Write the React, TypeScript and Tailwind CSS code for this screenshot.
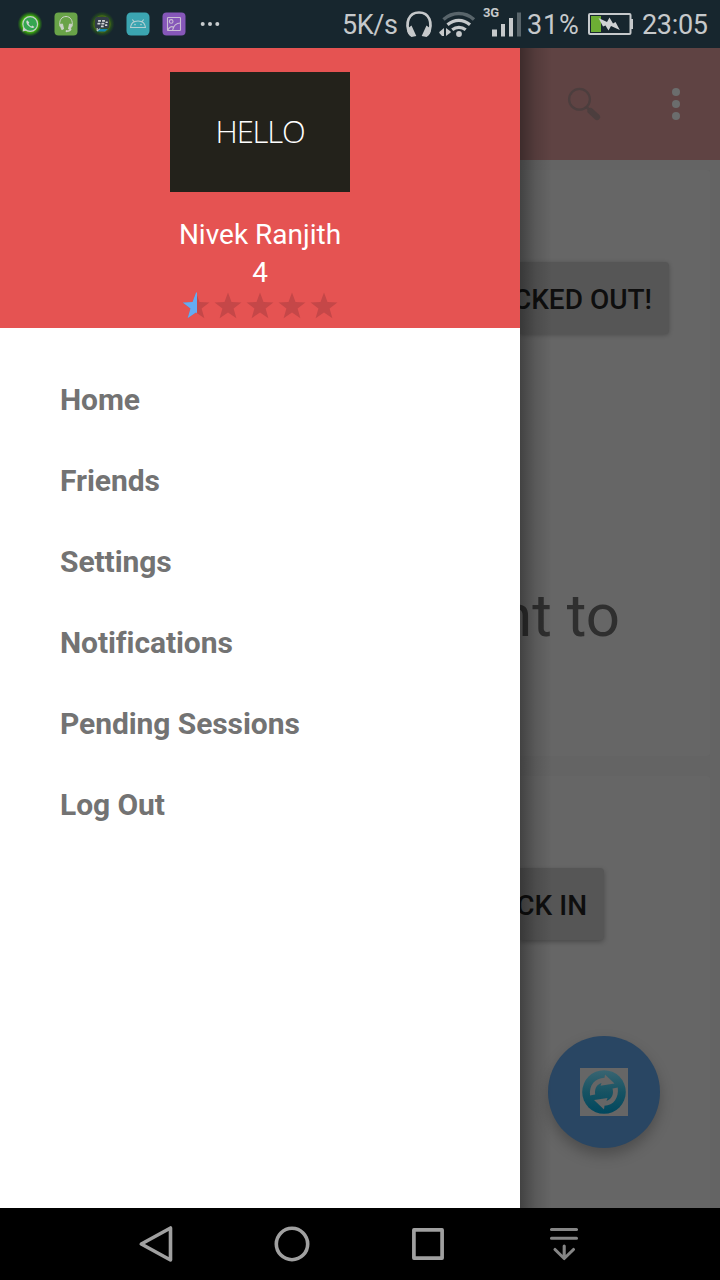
import React from "react";

const menuItems = ["Home", "Friends", "Settings", "Notifications", "Pending Sessions", "Log Out"];

const STAR = "M16 2.6 L19.5 12 L29.4 12.4 L21.6 18.4 L24.4 28.2 L16 22.5 L7.6 28.2 L10.4 18.4 L2.6 12.4 L12.5 12 Z";

function Star({ half }: { half?: boolean }) {
  return (
    <svg width="32" height="32" viewBox="0 0 32 32">
      <path d={STAR} fill="#c54748" />
      {half && <path d="M17 2.6 L16 2.6 L12.5 12 L2.6 12.4 L10.4 18.4 L7.6 28.2 L16 22.5 L17 23.2 Z" fill="#64acf2" />}
    </svg>
  );
}

function NotificationIcons() {
  return (
    <div className="flex items-center gap-3">
      <svg width="24" height="24" viewBox="0 0 24 24" fill="none" className="overflow-visible">
        <defs>
          <radialGradient id="glowA">
            <stop offset="0.66" stopColor="#3fb40c" />
            <stop offset="1" stopColor="#2c8a12" stopOpacity="0" />
          </radialGradient>
        </defs>
        <circle cx="12" cy="12" r="12.5" fill="url(#glowA)" />
        <circle cx="12.2" cy="12" r="7.4" fill="#35a650" stroke="#c8cfc8" strokeWidth="1.2" />
        <path d="M5.2 15.5 4.6 19.4 9 18.4" fill="#c8cfc8" />
        <path d="M9.2 8.2c-1.6 1.2-.8 3.6 1.5 5.8 2.4 2.2 4.7 2.6 5.7.9l-2.1-1.4-1 .9c-1.4-.7-2.2-1.5-2.8-2.7l.8-1.1z" fill="#d0d5d0" />
      </svg>
      <svg width="24" height="24" viewBox="0 0 24 24" fill="none">
        <rect x=".5" y=".5" width="23" height="23" rx="4" fill="#69a348" />
        <path d="M6 14.5C4.7 8.5 7.6 4.5 12 4.5s7.3 4 6 10" stroke="#ccd2c8" strokeWidth="1" />
        <path d="M6 12.5 8.5 12l1 5-1.8.5zM18 12.5l-2.5-.5-1 5 1.8.5z" fill="#ccd2c8" stroke="#ccd2c8" />
        <path d="M17 17c-.6 1.5-1.8 2.2-3.8 2.2" stroke="#ccd2c8" strokeWidth="1.3" />
        <circle cx="12.7" cy="19.2" r="1.1" fill="#ccd2c8" />
      </svg>
      <svg width="24" height="24" viewBox="0 0 24 24" fill="none" className="overflow-visible">
        <defs>
          <radialGradient id="glowB">
            <stop offset="0.65" stopColor="#2d5c18" />
            <stop offset="1" stopColor="#25511b" stopOpacity="0" />
          </radialGradient>
        </defs>
        <circle cx="12" cy="12" r="12.5" fill="url(#glowB)" />
        <circle cx="12" cy="12" r="8.2" stroke="#4b641b" />
        <path d="M7 5h9.500q2.500 0 2.500 2.500V14q0 2.500-2.500 2.500H10L7 19v-2.500q-2 0-2-2.500V7.500Q5 5 7 5Z" fill="#333c48" />
        <path d="M9 17h9l-3 2.500H7z" fill="#1387b0" />
        <path d="M7.200 16v3l3-2.500" stroke="#d6d9dc" strokeWidth="1" />
        <g fill="#d1d4d6">
          <rect x="8" y="8" width="3" height="1.700" rx=".5" />
          <rect x="12" y="8" width="3" height="1.700" rx=".5" />
          <rect x="7.400" y="10.800" width="3" height="1.700" rx=".5" />
          <rect x="11.400" y="10.800" width="3" height="1.700" rx=".5" />
          <rect x="15.500" y="9.500" width="2.300" height="1.600" rx=".5" />
          <rect x="10.900" y="13.600" width="2.800" height="1.600" rx=".5" />
          <rect x="15" y="12.300" width="2.300" height="1.600" rx=".5" />
        </g>
      </svg>
      <svg width="24" height="24" viewBox="0 0 24 24" fill="none">
        <rect x=".5" y=".5" width="23" height="23" rx="4.5" fill="#3ba5b1" />
        <path d="M4.500 15.500h15c-.4-4.600-3.400-6.500-7.500-6.500s-7.100 1.900-7.500 6.500ZM6.300 7.500l2 2.300M17.700 7.500l-2 2.300" stroke="#b4cfd2" strokeWidth="1.100" strokeLinejoin="round" />
        <circle cx="9" cy="12.600" r=".8" fill="#b4cfd2" />
        <circle cx="15" cy="12.600" r=".8" fill="#b4cfd2" />
      </svg>
      <svg width="24" height="24" viewBox="0 0 24 24" fill="none" stroke="#c9bdd3" strokeWidth="1.100">
        <rect x=".5" y=".5" width="23" height="23" rx="4" fill="#8657b9" stroke="none" />
        <rect x="5.500" y="5.500" width="13" height="13" rx=".7" />
        <circle cx="9.200" cy="9.400" r="1.800" />
        <path d="M5.500 18.500c2-3.600 4-4.600 6-3.300M10.500 18.500c1-5 4-7.500 8-7.500" />
      </svg>
      <svg width="24" height="24" viewBox="0 0 24 24" fill="#c9cdcf">
        <circle cx="4.700" cy="12" r="2" />
        <circle cx="12" cy="12" r="2" />
        <circle cx="19.300" cy="12" r="2" />
      </svg>
    </div>
  );
}

function StatusBar() {
  return (
    <header className="flex h-12 w-full shrink-0 items-center bg-[#17262e] pl-[18px] text-[27px] leading-12 text-[#c6c9cb]">
      <NotificationIcons />
      <span className="ml-[120px] w-[56px] pt-[2px] tracking-[-0.4px] whitespace-nowrap">5K/s</span>
      <svg width="30" height="48" viewBox="404 0 30 48" fill="none" className="ml-[6px]">
        <path d="M409.500 33C405 23 408.500 12.500 419 12.500s14 10.500 9.500 20.500" stroke="#c6c9cb" strokeWidth="2.700" />
        <path d="M411.500 25.500 416.300 36l-4.800 1c-3-1.500-4.500-4.500-4.500-8ZM426.500 25.500 421.700 36l4.800 1c3-1.500 4.500-4.500 4.500-8Z" fill="#c6c9cb" />
      </svg>
      <svg width="44" height="48" viewBox="437 0 44 48" fill="none" className="ml-[3px]">
        <path d="M443.500 19.500c9-8 21.500-8 30.500 0" stroke="#59656b" strokeWidth="3.500" />
        <path d="M447.500 24.800c7-6 15.500-6 22.500 0M452.200 29.800c4-3.200 9.500-3.200 13.500 0" stroke="#c6c9cb" strokeWidth="3.200" />
        <circle cx="459" cy="34" r="2.900" fill="#c6c9cb" />
        <path d="M444 28v8h-2l-2.700-3v-1zM446 28v8l4.700-3.500v-1z" fill="#c6c9cb" />
      </svg>
      <div className="ml-0.5 flex h-12 w-[41px] items-start">
        <span className="w-5 pt-[5px] text-[13px] leading-4 font-bold tracking-[-0.2px]">3G</span>
        <svg width="34" height="48" viewBox="487 0 34 48" className="-ml-[16px] shrink-0">
          <rect x="492" y="29.500" width="5" height="7" fill="#c6c9cb" />
          <rect x="501" y="24" width="4" height="12.500" fill="#c6c9cb" />
          <rect x="509" y="18" width="4" height="18.500" fill="#c6c9cb" />
          <rect x="517" y="12.500" width="4" height="24" fill="#59656b" />
        </svg>
      </div>
      <span className="ml-[3px] w-[54px] pt-[2px] tracking-[0.8px] whitespace-nowrap">31%</span>
      <svg width="48" height="48" viewBox="587 0 48 48" fill="none" className="ml-[6px]">
        <rect x="589" y="14" width="41.500" height="20" rx="1" stroke="#c6c9cb" strokeWidth="2" />
        <rect x="631" y="19" width="2" height="10" fill="#c6c9cb" />
        <rect x="591" y="16" width="10" height="16" fill="#6dae34" />
        <path d="M598.500 18 607 22 609.500 17.500 613 23.500 615.500 22 619.800 30 611 26 608.500 30.500 605.500 25.500 603 26.500Z" fill="#d0d2d3" />
      </svg>
      <span className="ml-[7px] pt-[2px] tracking-[-0.3px] whitespace-nowrap">23:05</span>
    </header>
  );
}

function Drawer() {
  return (
    <aside className="flex w-[520px] shrink-0 flex-col bg-white">
      <div className="flex h-[280px] flex-col items-center bg-[#e55352] pt-6 text-white">
        <div className="flex h-[120px] w-[180px] items-center justify-center bg-[#23221b] pb-[2px] font-['Open_Sans',sans-serif] text-[31px] font-light tracking-[-1.2px]">
          HELLO
        </div>
        <div className="mt-6 text-[28px] leading-[38px]">Nivek Ranjith</div>
        <div className="text-[28px] leading-[38px]">4</div>
        <div className="-mt-[2px] flex">
          <Star half />
          <Star />
          <Star />
          <Star />
          <Star />
        </div>
      </div>
      <nav className="flex flex-col pt-[31px] pl-[60px] text-[30px] font-bold tracking-[-0.08px] text-[#737373]">
        {menuItems.map((item) => (
          <a key={item} className="flex h-[81px] items-center">
            {item}
          </a>
        ))}
      </nav>
    </aside>
  );
}

function DimmedContent() {
  return (
    <main className="relative flex w-[200px] shrink-0 flex-col overflow-hidden bg-[#646464]">
      <div className="flex h-28 shrink-0 items-center bg-[#5f4343]">
        <svg width="40" height="40" viewBox="564 84 40 40" fill="none" className="ml-11">
          <circle cx="579.500" cy="99.300" r="10.400" stroke="#4c3e3e" strokeWidth="2.300" />
          <path d="m586.500 107 3 3" stroke="#4c3e3e" strokeWidth="2.500" />
          <path d="m590.500 111 6.500 6" stroke="#4c3e3e" strokeWidth="6.200" strokeLinejoin="round" strokeLinecap="round" />
        </svg>
        <svg width="12" height="40" viewBox="0 0 12 40" fill="#6b6d6d" className="ml-[66px]">
          <circle cx="6" cy="8" r="4" />
          <circle cx="6" cy="20" r="4" />
          <circle cx="6" cy="32" r="4" />
        </svg>
      </div>
      <section className="mt-[10px] flex h-[586px] w-[190px] shrink-0 flex-col items-start rounded-r-[3px] bg-[#666666]">
        <div className="mt-[92px] flex h-[72px] w-[149px] items-center justify-end rounded-r-[4px] bg-[#565656] pt-[3px] pr-[17px] text-[28px] font-medium whitespace-nowrap text-[#0e0e0e] shadow-[0_1px_4px_rgba(0,0,0,0.25)]">
          CKED OUT!
        </div>
        <div className="mt-[247px] flex w-[100px] justify-end text-[60px] leading-[70px] whitespace-nowrap text-[#2f2f2f]">
          nt to
        </div>
      </section>
      <section className="mt-5 flex h-[440px] w-[190px] shrink-0 flex-col items-start rounded-tr-[3px] bg-[#666666]">
        <div className="mt-[92px] flex h-[72px] w-[84px] items-center justify-end rounded-r-[4px] bg-[#565656] pt-[3px] pr-[17px] text-[28px] font-medium whitespace-nowrap text-[#0e0e0e] shadow-[0_2px_5px_rgba(0,0,0,0.28)]">
          CK IN
        </div>
        <button className="mt-24 ml-7 flex size-28 items-center justify-center rounded-full bg-[#294663] shadow-[0_7px_14px_rgba(0,0,0,0.25)]">
          <svg width="48" height="48" viewBox="0 0 48 48">
            <defs>
              <linearGradient id="sync" x1="0" y1="0" x2="0" y2="1">
                <stop offset="0" stopColor="#396572" />
                <stop offset="0.5" stopColor="#175363" />
                <stop offset="1" stopColor="#00475e" />
              </linearGradient>
            </defs>
            <rect width="48" height="48" fill="#666666" />
            <circle cx="24" cy="24" r="21.800" fill="url(#sync)" />
            <path d="M10 27.500C9 17 15 10 24.500 9.800L25 6.500 34.500 15.500 20.500 17.800 21.500 15C16.500 16.500 14.500 21 15.200 26.500Z" fill="#666666" />
            <path d="M37.800 19.500C39 30 33.500 37.500 24.500 37.800L24 41.500 14 32 27.500 30 26.500 33C32 31 34 26 32.500 20.500Z" fill="#666666" />
          </svg>
        </button>
      </section>
      <div className="pointer-events-none absolute inset-y-0 left-0 w-8 bg-linear-to-r from-black/35 via-black/12 to-transparent" />
    </main>
  );
}

function NavigationBar() {
  return (
    <footer className="flex h-[72px] shrink-0 items-center gap-24 bg-black pl-[136px]">
      <svg width="40" height="48" viewBox="0 0 40 48" fill="none" stroke="#a0a0a0" strokeWidth="3.600" strokeLinejoin="round">
        <path d="M34.500 8v32L5.300 24Z" />
      </svg>
      <svg width="40" height="48" viewBox="0 0 40 48" fill="none" stroke="#a0a0a0" strokeWidth="3.600">
        <circle cx="20" cy="24" r="15.700" />
      </svg>
      <svg width="40" height="48" viewBox="0 0 40 48" fill="none" stroke="#a0a0a0" strokeWidth="3.700" strokeLinejoin="round">
        <rect x="5.900" y="9.900" width="28.200" height="28.200" />
      </svg>
      <svg width="40" height="48" viewBox="0 0 40 48" fill="none" stroke="#858585" strokeWidth="3.100" strokeLinecap="round" strokeLinejoin="round">
        <path d="M7.500 9.500h25M7.500 18.300h25M20.200 26v12M11 29.500l9.200 9 9.300-9" />
      </svg>
    </footer>
  );
}

export default function App() {
  return (
    <div className="flex h-[1280px] w-[720px] flex-col overflow-hidden font-['Roboto',sans-serif]">
      <StatusBar />
      <div className="flex h-[1160px] shrink-0">
        <Drawer />
        <DimmedContent />
      </div>
      <NavigationBar />
    </div>
  );
}
